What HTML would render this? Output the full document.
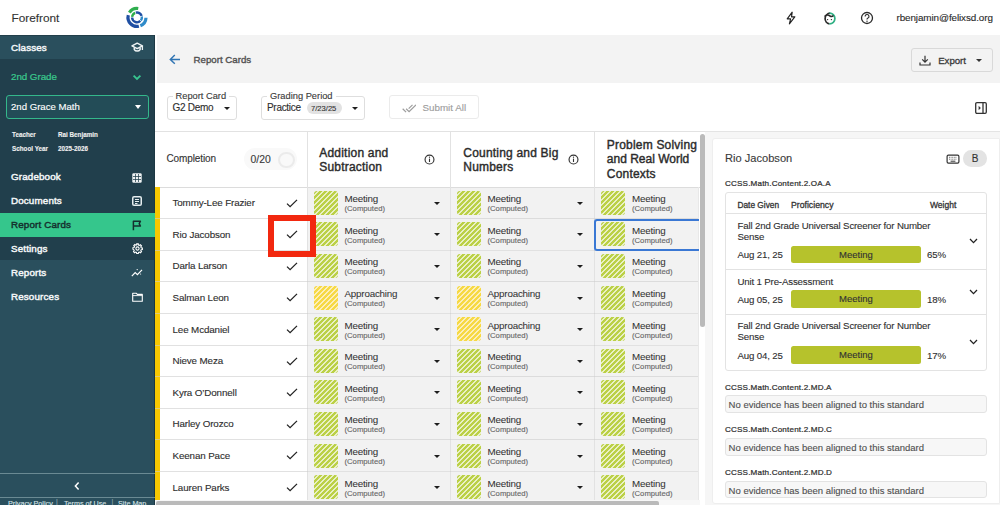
<!DOCTYPE html>
<html><head><meta charset="utf-8"><style>
*{box-sizing:border-box;margin:0;padding:0}
html,body{width:1000px;height:505px;overflow:hidden;background:#fff;font-family:"Liberation Sans",sans-serif;color:#333;-webkit-text-stroke-width:0.12px}
body{position:relative}
.a{position:absolute;white-space:nowrap}
.b{position:absolute}
.nav{position:absolute;left:0;width:155px;height:24px}
.nv{position:absolute;left:11px;color:#f4f7f8;font-size:9.8px;letter-spacing:0.15px;line-height:1;-webkit-text-stroke:0.45px currentColor;white-space:nowrap}
.sw{position:absolute;width:24px;height:24px;border-radius:3px;
 background:repeating-linear-gradient(135deg,#bbd046 0px,#bbd046 2.3px,#e9f0c4 2.3px,#e9f0c4 3.6px)}
.sw.y{background:repeating-linear-gradient(135deg,#f6d944 0px,#f6d944 2.3px,#fcefbb 2.3px,#fcefbb 3.6px)}
.mt{position:absolute;font-size:9.8px;letter-spacing:-0.2px;color:#333;-webkit-text-stroke:0.05px #333;white-space:nowrap}
.cp{position:absolute;font-size:7.7px;color:#666;white-space:nowrap}
.car{position:absolute;width:0;height:0;border-left:3.2px solid transparent;border-right:3.2px solid transparent;border-top:3.6px solid #1e1e1e}
.hd{position:absolute;font-size:12px;letter-spacing:0.2px;line-height:1;-webkit-text-stroke:0.4px #2b2b2b;color:#2b2b2b;white-space:nowrap}
.nm{position:absolute;font-size:9.8px;letter-spacing:-0.12px;color:#2e2e2e;-webkit-text-stroke:0.12px #2e2e2e;white-space:nowrap}
.hl{position:absolute;height:1px;background:#e2e2e2}
.vl{position:absolute;width:1px;background:#e2e2e2}
.lbl{position:absolute;left:725px;font-size:8.1px;letter-spacing:0.17px;line-height:1;-webkit-text-stroke:0.22px #2e2e2e;color:#2e2e2e;white-space:nowrap}
.noev{position:absolute;left:725px;width:262px;height:17.8px;background:#f7f7f7;border:1px solid #e3e3e3;border-radius:3px}
.noevt{position:absolute;left:728.6px;font-size:9.5px;color:#505050;white-space:nowrap}
.ev{position:absolute;font-size:9.7px;letter-spacing:-0.17px;line-height:1;color:#2e2e2e;-webkit-text-stroke:0.1px #2e2e2e;white-space:nowrap}
.bar{position:absolute;left:790.8px;width:130.3px;height:17.8px;background:#b6c22c;border-radius:2.5px;font-size:9.5px;color:#333;text-align:center;line-height:17.5px}
</style></head><body>
<div class="a" style="left:11.5px;top:10.5px;font-size:11.8px;color:#333">Forefront</div>
<svg class="b" style="left:125px;top:5px" width="25" height="25" viewBox="0 0 25 25">
<g fill="none">
<path d="M4.37 7.63 A9 9 0 0 1 13.25 3.49" stroke="#2fae4e" stroke-width="3.2"/>
<path d="M13.87 21.20 A9 9 0 0 1 3.31 10.07" stroke="#1f4fa3" stroke-width="3.2"/>
<path d="M20.99 12.71 A9 9 0 0 1 15.37 20.74" stroke="#2f8bc9" stroke-width="3.2"/>
<path d="M7.12 11.97 A4.9 4.9 0 0 1 10.16 7.86" stroke="#2fae4e" stroke-width="2.4"/>
<path d="M10.81 7.65 A4.9 4.9 0 0 1 16.66 10.89" stroke="#1f4fa3" stroke-width="2.4"/>
<path d="M16.83 11.55 A4.9 4.9 0 0 1 15.86 15.42" stroke="#2f8bc9" stroke-width="2.4"/>
<path d="M15.40 15.92 A4.9 4.9 0 0 1 7.10 12.57" stroke="#1f4fa3" stroke-width="2.4"/>
</g></svg>
<svg class="b" style="left:785px;top:11px" width="12" height="14" viewBox="0 0 12 14">
<path d="M7.2 1.2 L2.2 7.8 H5.6 L4.4 12.8 L9.8 5.8 H6.5 Z" fill="none" stroke="#222" stroke-width="1.15" stroke-linejoin="round"/></svg>
<svg class="b" style="left:822px;top:10.5px" width="15" height="15" viewBox="0 0 15 15">
<path d="M8.2 2.2 A5.4 5.4 0 0 0 7.5 12.9" fill="none" stroke="#2b2b2b" stroke-width="1.7"/>
<path d="M7.5 2.1 A5.4 5.4 0 0 1 7.5 12.9" fill="none" stroke="#2fb083" stroke-width="1.7"/>
<path d="M2.6 5.6 C4.2 3.6 6.4 3.8 8 5 C9.2 5.8 10.6 5.4 11.4 4.4" fill="none" stroke="#2b2b2b" stroke-width="1.6"/>
<circle cx="5.6" cy="8.6" r="0.7" fill="#2b2b2b"/><circle cx="9.4" cy="8.6" r="0.7" fill="#2b2b2b"/>
</svg>
<svg class="b" style="left:860px;top:10.5px" width="14" height="14" viewBox="0 0 14 14">
<circle cx="7" cy="7" r="5.5" fill="none" stroke="#2b2b2b" stroke-width="1.3"/>
<path d="M5.1 5.5 A1.95 1.95 0 1 1 7.6 7.3 C7.1 7.6 7 7.9 7 8.6" fill="none" stroke="#2b2b2b" stroke-width="1.15"/>
<circle cx="7" cy="10.2" r="0.7" fill="#2b2b2b"/></svg>
<div class="a" style="left:896.5px;top:12px;font-size:9.9px;letter-spacing:-0.1px;color:#2a2a2a">rbenjamin@felixsd.org</div>
<div class="b" style="left:0;top:35px;width:155px;height:470px;background:#2a4f5d"></div>
<div class="b" style="left:0;top:59px;width:155px;height:201px;background:#213f4c"></div>
<div class="b" style="left:0;top:35px;width:155px;height:1px;background:#223f4b"></div>
<div class="b" style="left:153.8px;top:35px;width:1.2px;height:470px;background:#1b3743"></div>
<div class="nv" style="top:43.2px">Classes</div>
<svg class="b" style="left:131px;top:42px" width="13" height="11" viewBox="0 0 13 11">
<path d="M6.2 1.2 L11.4 3.9 L6.2 6.6 L1.0 3.9 Z" fill="none" stroke="#eef3f4" stroke-width="1.5" stroke-linejoin="round"/>
<path d="M3.3 5.6 V7.6 C4.6 9.6 7.8 9.6 9.1 7.6 V5.6" fill="none" stroke="#eef3f4" stroke-width="1.5"/>
<path d="M11.4 4 V8" stroke="#eef3f4" stroke-width="1.3"/></svg>
<div class="a" style="left:11px;top:70.5px;font-size:9.8px;letter-spacing:-0.05px;-webkit-text-stroke:0.2px #3bcb8e;color:#3bcb8e">2nd Grade</div>
<svg class="b" style="left:132px;top:73.5px" width="10" height="7" viewBox="0 0 10 7">
<path d="M1.6 1.6 L5 5 L8.4 1.6" fill="none" stroke="#38c690" stroke-width="1.8"/></svg>
<div class="b" style="left:5.5px;top:95px;width:143.5px;height:24px;border:1.3px solid #34b88b;border-radius:3px;background:#234c57"></div>
<div class="a" style="left:11px;top:100.5px;font-size:9.6px;color:#fff">2nd Grace Math</div>
<div class="car" style="left:135px;top:105px;border-top-color:#fff;border-left-width:3.5px;border-right-width:3.5px;border-top-width:4px"></div>
<div class="a" style="left:12px;top:130.5px;font-size:6.3px;color:#f0f0f0;font-weight:bold">Teacher</div>
<div class="a" style="left:58px;top:130.5px;font-size:6.3px;color:#f0f0f0;font-weight:bold">Rai Benjamin</div>
<div class="a" style="left:12px;top:145px;font-size:6.3px;color:#f0f0f0;font-weight:bold">School Year</div>
<div class="a" style="left:58px;top:145px;font-size:6.3px;color:#f0f0f0;font-weight:bold">2025-2026</div>
<div class="nv" style="top:172px">Gradebook</div>
<div class="nv" style="top:196px">Documents</div>
<div class="b" style="left:0;top:213px;width:155px;height:24px;background:#35c68c"></div>
<div class="nv" style="top:220px;color:#15302f">Report Cards</div>
<div class="nv" style="top:243.8px">Settings</div>
<div class="nv" style="top:267.8px">Reports</div>
<div class="nv" style="top:291.8px">Resources</div>
<svg class="b" style="left:132px;top:172.5px" width="10" height="10" viewBox="0 0 10 10">
<rect x="0.3" y="0.3" width="9.4" height="9.4" rx="1.2" fill="#eef2f3"/>
<path d="M3.5 1V9M6.5 1V9M1 3.5H9M1 6.5H9" stroke="#213f4c" stroke-width="0.75"/></svg>
<svg class="b" style="left:132px;top:196px" width="10" height="10" viewBox="0 0 10 10">
<rect x="0.75" y="0.75" width="8.5" height="8.5" rx="1.3" fill="none" stroke="#e6edef" stroke-width="1.5"/>
<path d="M3 3.5H7M3 5.5H7M3 7.5H5.5" stroke="#e6edef" stroke-width="1"/></svg>
<svg class="b" style="left:132px;top:220px" width="10" height="11" viewBox="0 0 10 11">
<path d="M1.4 10.2 V1.2 H8.4 L7.2 3.6 L8.4 6 H1.4" fill="none" stroke="#15302f" stroke-width="1.5" stroke-linejoin="round"/></svg>
<svg class="b" style="left:131.5px;top:243px" width="11" height="11" viewBox="0 0 24 24">
<path fill="none" stroke="#fff" stroke-width="2.4" d="M12 8.5a3.5 3.5 0 1 0 0 7a3.5 3.5 0 1 0 0-7zM10.3 2h3.4l.5 2.6 1.9.8 2.2-1.5 2.4 2.4-1.5 2.2.8 1.9 2.6.5v3.4l-2.6.5-.8 1.9 1.5 2.2-2.4 2.4-2.2-1.5-1.9.8-.5 2.6h-3.4l-.5-2.6-1.9-.8-2.2 1.5-2.4-2.4 1.5-2.2-.8-1.9L2 13.7v-3.4l2.6-.5.8-1.9-1.5-2.2 2.4-2.4 2.2 1.5 1.9-.8z"/></svg>
<svg class="b" style="left:131px;top:268px" width="12" height="9" viewBox="0 0 12 9">
<path d="M0.8 8.2 L4.2 4.6 L6.4 6.6 L11 1.8" fill="none" stroke="#fff" stroke-width="1.2"/>
<circle cx="6.2" cy="1.6" r="0.7" fill="#fff"/><circle cx="9.6" cy="6" r="0.6" fill="#fff"/></svg>
<svg class="b" style="left:131.5px;top:291.5px" width="11" height="10" viewBox="0 0 11 10">
<path d="M0.7 1.2 H4.2 L5.3 2.4 H10.3 V9.3 H0.7 Z" fill="none" stroke="#fff" stroke-width="1.1" stroke-linejoin="round"/>
<path d="M0.7 3.6 H10.3" stroke="#fff" stroke-width="0.9"/></svg>
<div class="b" style="left:0;top:473px;width:155px;height:1px;background:#6a8a93"></div>
<svg class="b" style="left:73px;top:481px" width="8" height="10" viewBox="0 0 8 10">
<path d="M5.6 1.6 L2.4 5 L5.6 8.4" fill="none" stroke="#fff" stroke-width="1.5"/></svg>
<div class="b" style="left:0;top:496.5px;width:155px;height:1px;background:#6a8a93"></div>
<div class="a" style="left:8px;top:498.5px;font-size:7.2px;color:#d6e2e5">Privacy Policy</div>
<div class="a" style="left:56px;top:498px;font-size:7px;color:#8fa8ae">|</div>
<div class="a" style="left:64px;top:498.5px;font-size:7.2px;color:#d6e2e5">Terms of Use</div>
<div class="a" style="left:111.5px;top:498px;font-size:7px;color:#8fa8ae">|</div>
<div class="a" style="left:118px;top:498.5px;font-size:7.2px;color:#d6e2e5">Site Map</div>
<div class="b" style="left:157px;top:35px;width:843px;height:48.3px;background:#f3f3f3"></div>
<svg class="b" style="left:168.5px;top:54.3px" width="12" height="11" viewBox="0 0 12 11">
<path d="M11 5.4 H1.8 M5.8 1.1 L1.3 5.4 L5.8 9.7" fill="none" stroke="#2f74b3" stroke-width="1.45"/></svg>
<div class="a" style="left:193.5px;top:55.3px;font-size:9.7px;line-height:1;-webkit-text-stroke:0.35px #505050;color:#505050">Report Cards</div>
<div class="b" style="left:910.5px;top:48px;width:82px;height:23.6px;border:1px solid #d9d9d9;border-radius:3px;background:#f3f3f3"></div>
<svg class="b" style="left:918.5px;top:54.5px" width="12" height="11" viewBox="0 0 12 11">
<path d="M6 0.8 V7 M3.2 4.4 L6 7.2 L8.8 4.4 M1 7.6 V10 H11 V7.6" fill="none" stroke="#333" stroke-width="1.2"/></svg>
<div class="a" style="left:938.2px;top:55.2px;font-size:9.7px;letter-spacing:-0.05px;-webkit-text-stroke:0.3px #3a3a3a;color:#3a3a3a">Export</div>
<div class="car" style="left:975.5px;top:58.5px;border-top-color:#333"></div>
<div class="b" style="left:166.5px;top:95.5px;width:70.5px;height:24px;border:1px solid #dedede;border-radius:3px"></div>
<div class="b" style="left:172.5px;top:93px;width:56.5px;height:4px;background:#fff"></div>
<div class="a" style="left:175.5px;top:90.7px;font-size:9.3px;color:#3a3a3a">Report Card</div>
<div class="a" style="left:172.5px;top:101.5px;font-size:10px;letter-spacing:-0.3px;color:#2e2e2e">G2 Demo</div>
<div class="car" style="left:223.5px;top:107px"></div>
<div class="b" style="left:261px;top:95.5px;width:103.5px;height:24px;border:1px solid #dedede;border-radius:3px"></div>
<div class="b" style="left:267px;top:93px;width:68.5px;height:4px;background:#fff"></div>
<div class="a" style="left:270px;top:90.7px;font-size:9.3px;color:#3a3a3a">Grading Period</div>
<div class="a" style="left:267px;top:101.5px;font-size:10px;letter-spacing:-0.3px;color:#2e2e2e">Practice</div>
<div class="b" style="left:307px;top:102px;width:34.5px;height:11.5px;border-radius:6px;background:#e2e2e2"></div>
<div class="a" style="left:311px;top:103.8px;font-size:7.6px;color:#333">7/23/25</div>
<div class="car" style="left:351.5px;top:107px"></div>
<div class="b" style="left:389.3px;top:95.3px;width:89.8px;height:24px;border:1px solid #ebebeb;border-radius:3px"></div>
<svg class="b" style="left:401.6px;top:100.8px" width="14.6" height="14.6" viewBox="0 0 24 24">
<path fill="#9e9e9e" d="M18 7l-1.41-1.41-6.34 6.34 1.41 1.41L18 7zm4.24-1.41L11.66 16.17 7.48 12l-1.41 1.41L11.66 19l12-12-1.42-1.41zM.41 13.41L6 19l1.41-1.41L1.83 12 .41 13.41z"/></svg>
<div class="a" style="left:422.5px;top:102px;font-size:9.8px;color:#9c9c9c">Submit All</div>
<svg class="b" style="left:975px;top:102px" width="12" height="12" viewBox="0 0 12 12">
<rect x="0.7" y="0.7" width="10.6" height="10.6" rx="1.2" fill="none" stroke="#333" stroke-width="1.3"/>
<path d="M8 0.7 V11.3" stroke="#333" stroke-width="1.3"/><path d="M3.6 3.8 L5.8 6 L3.6 8.2 Z" fill="#333"/></svg>
<div class="hl" style="left:155px;top:131px;width:845px"></div>
<div class="hl" style="left:155px;top:186.5px;width:545px;background:#dcdcdc"></div>
<div class="a" style="left:166.5px;top:153.1px;font-size:10px;letter-spacing:-0.12px;color:#333">Completion</div>
<div class="b" style="left:244px;top:147.5px;width:53px;height:22px;border-radius:11px;background:#f9f9f9"></div>
<div class="a" style="left:250.5px;top:155px;font-size:10.4px;line-height:1;color:#3a3a3a">0/20</div>
<div class="b" style="left:278px;top:151.5px;width:16.5px;height:16.5px;border-radius:50%;border:2.6px solid #ebebeb"></div>
<div class="hd" style="left:319.3px;top:146.60px">Addition and</div>
<div class="hd" style="left:319.3px;top:160.95px">Subtraction</div>
<div class="hd" style="left:463.3px;top:146.60px">Counting and Big</div>
<div class="hd" style="left:463.3px;top:160.95px">Numbers</div>
<div class="hd" style="left:606.8px;top:139.10px">Problem Solving</div>
<div class="hd" style="left:606.8px;top:153.45px;letter-spacing:0">and Real World</div>
<div class="hd" style="left:606.8px;top:167.80px">Contexts</div>
<svg class="b" style="left:424.2px;top:153.8px" width="11" height="11" viewBox="0 0 11 11">
<circle cx="5.5" cy="5.5" r="4.45" fill="none" stroke="#333" stroke-width="1.15"/>
<path d="M5.5 4.6 V8" stroke="#333" stroke-width="1.1"/><circle cx="5.5" cy="3.2" r="0.65" fill="#333"/></svg>
<svg class="b" style="left:568.2px;top:153.8px" width="11" height="11" viewBox="0 0 11 11">
<circle cx="5.5" cy="5.5" r="4.45" fill="none" stroke="#333" stroke-width="1.15"/>
<path d="M5.5 4.6 V8" stroke="#333" stroke-width="1.1"/><circle cx="5.5" cy="3.2" r="0.65" fill="#333"/></svg>
<div class="b" style="left:154.6px;top:187.00px;width:5.7px;height:31.80px;background:#f8c800"></div>
<div class="nm" style="left:172.5px;top:197.10px">Tommy-Lee Frazier</div>
<svg class="b" style="left:286px;top:198.5px" width="12" height="9" viewBox="0 0 12 9">
<path d="M1 4.6 L4.1 7.6 L11 0.9" fill="none" stroke="#222" stroke-width="1.3"/></svg>
<div class="b" style="left:307.5px;top:187.5px;width:142.5px;height:31.1px;background:#f2f2f2"></div>
<div class="sw" style="left:313.5px;top:190.8px"></div>
<div class="mt" style="left:344.5px;top:193.10px">Meeting</div>
<div class="cp" style="left:344.5px;top:204.2px">(Computed)</div>
<div class="car" style="left:434.00px;top:201.80px"></div>
<div class="b" style="left:450.5px;top:187.5px;width:144px;height:31.1px;background:#f2f2f2"></div>
<div class="sw" style="left:456.5px;top:190.8px"></div>
<div class="mt" style="left:487.5px;top:193.10px">Meeting</div>
<div class="cp" style="left:487.5px;top:204.2px">(Computed)</div>
<div class="car" style="left:577.00px;top:201.80px"></div>
<div class="b" style="left:595px;top:187.5px;width:103px;height:31.1px;background:#f2f2f2"></div>
<div class="sw" style="left:601px;top:190.8px"></div>
<div class="mt" style="left:632px;top:193.10px">Meeting</div>
<div class="cp" style="left:632px;top:204.2px">(Computed)</div>
<div class="b" style="left:154.6px;top:218.60px;width:5.7px;height:31.80px;background:#f8c800"></div>
<div class="nm" style="left:172.5px;top:228.70px">Rio Jacobson</div>
<svg class="b" style="left:286px;top:230.1px" width="12" height="9" viewBox="0 0 12 9">
<path d="M1 4.6 L4.1 7.6 L11 0.9" fill="none" stroke="#222" stroke-width="1.3"/></svg>
<div class="b" style="left:307.5px;top:219.1px;width:142.5px;height:31.1px;background:#f2f2f2"></div>
<div class="sw" style="left:313.5px;top:222.4px"></div>
<div class="mt" style="left:344.5px;top:224.70px">Meeting</div>
<div class="cp" style="left:344.5px;top:235.79999999999998px">(Computed)</div>
<div class="car" style="left:434.00px;top:233.40px"></div>
<div class="b" style="left:450.5px;top:219.1px;width:144px;height:31.1px;background:#f2f2f2"></div>
<div class="sw" style="left:456.5px;top:222.4px"></div>
<div class="mt" style="left:487.5px;top:224.70px">Meeting</div>
<div class="cp" style="left:487.5px;top:235.79999999999998px">(Computed)</div>
<div class="car" style="left:577.00px;top:233.40px"></div>
<div class="b" style="left:595px;top:219.1px;width:103px;height:31.1px;background:#f2f2f2"></div>
<div class="sw" style="left:601px;top:222.4px"></div>
<div class="mt" style="left:632px;top:224.70px">Meeting</div>
<div class="cp" style="left:632px;top:235.79999999999998px">(Computed)</div>
<div class="b" style="left:154.6px;top:250.20px;width:5.7px;height:31.80px;background:#f8c800"></div>
<div class="nm" style="left:172.5px;top:260.30px">Darla Larson</div>
<svg class="b" style="left:286px;top:261.7px" width="12" height="9" viewBox="0 0 12 9">
<path d="M1 4.6 L4.1 7.6 L11 0.9" fill="none" stroke="#222" stroke-width="1.3"/></svg>
<div class="b" style="left:307.5px;top:250.7px;width:142.5px;height:31.1px;background:#f2f2f2"></div>
<div class="sw" style="left:313.5px;top:254.0px"></div>
<div class="mt" style="left:344.5px;top:256.30px">Meeting</div>
<div class="cp" style="left:344.5px;top:267.4px">(Computed)</div>
<div class="car" style="left:434.00px;top:265.00px"></div>
<div class="b" style="left:450.5px;top:250.7px;width:144px;height:31.1px;background:#f2f2f2"></div>
<div class="sw" style="left:456.5px;top:254.0px"></div>
<div class="mt" style="left:487.5px;top:256.30px">Meeting</div>
<div class="cp" style="left:487.5px;top:267.4px">(Computed)</div>
<div class="car" style="left:577.00px;top:265.00px"></div>
<div class="b" style="left:595px;top:250.7px;width:103px;height:31.1px;background:#f2f2f2"></div>
<div class="sw" style="left:601px;top:254.0px"></div>
<div class="mt" style="left:632px;top:256.30px">Meeting</div>
<div class="cp" style="left:632px;top:267.4px">(Computed)</div>
<div class="b" style="left:154.6px;top:281.80px;width:5.7px;height:31.80px;background:#f8c800"></div>
<div class="nm" style="left:172.5px;top:291.90px">Salman Leon</div>
<svg class="b" style="left:286px;top:293.3px" width="12" height="9" viewBox="0 0 12 9">
<path d="M1 4.6 L4.1 7.6 L11 0.9" fill="none" stroke="#222" stroke-width="1.3"/></svg>
<div class="b" style="left:307.5px;top:282.3px;width:142.5px;height:31.1px;background:#f2f2f2"></div>
<div class="sw y" style="left:313.5px;top:285.6px"></div>
<div class="mt" style="left:344.5px;top:287.90px">Approaching</div>
<div class="cp" style="left:344.5px;top:299.0px">(Computed)</div>
<div class="car" style="left:434.00px;top:296.60px"></div>
<div class="b" style="left:450.5px;top:282.3px;width:144px;height:31.1px;background:#f2f2f2"></div>
<div class="sw y" style="left:456.5px;top:285.6px"></div>
<div class="mt" style="left:487.5px;top:287.90px">Approaching</div>
<div class="cp" style="left:487.5px;top:299.0px">(Computed)</div>
<div class="car" style="left:577.00px;top:296.60px"></div>
<div class="b" style="left:595px;top:282.3px;width:103px;height:31.1px;background:#f2f2f2"></div>
<div class="sw" style="left:601px;top:285.6px"></div>
<div class="mt" style="left:632px;top:287.90px">Meeting</div>
<div class="cp" style="left:632px;top:299.0px">(Computed)</div>
<div class="b" style="left:154.6px;top:313.40px;width:5.7px;height:31.80px;background:#f8c800"></div>
<div class="nm" style="left:172.5px;top:323.50px">Lee Mcdaniel</div>
<svg class="b" style="left:286px;top:324.9px" width="12" height="9" viewBox="0 0 12 9">
<path d="M1 4.6 L4.1 7.6 L11 0.9" fill="none" stroke="#222" stroke-width="1.3"/></svg>
<div class="b" style="left:307.5px;top:313.9px;width:142.5px;height:31.1px;background:#f2f2f2"></div>
<div class="sw" style="left:313.5px;top:317.2px"></div>
<div class="mt" style="left:344.5px;top:319.50px">Meeting</div>
<div class="cp" style="left:344.5px;top:330.59999999999997px">(Computed)</div>
<div class="car" style="left:434.00px;top:328.20px"></div>
<div class="b" style="left:450.5px;top:313.9px;width:144px;height:31.1px;background:#f2f2f2"></div>
<div class="sw y" style="left:456.5px;top:317.2px"></div>
<div class="mt" style="left:487.5px;top:319.50px">Approaching</div>
<div class="cp" style="left:487.5px;top:330.59999999999997px">(Computed)</div>
<div class="car" style="left:577.00px;top:328.20px"></div>
<div class="b" style="left:595px;top:313.9px;width:103px;height:31.1px;background:#f2f2f2"></div>
<div class="sw" style="left:601px;top:317.2px"></div>
<div class="mt" style="left:632px;top:319.50px">Meeting</div>
<div class="cp" style="left:632px;top:330.59999999999997px">(Computed)</div>
<div class="b" style="left:154.6px;top:345.00px;width:5.7px;height:31.80px;background:#f8c800"></div>
<div class="nm" style="left:172.5px;top:355.10px">Nieve Meza</div>
<svg class="b" style="left:286px;top:356.5px" width="12" height="9" viewBox="0 0 12 9">
<path d="M1 4.6 L4.1 7.6 L11 0.9" fill="none" stroke="#222" stroke-width="1.3"/></svg>
<div class="b" style="left:307.5px;top:345.5px;width:142.5px;height:31.1px;background:#f2f2f2"></div>
<div class="sw" style="left:313.5px;top:348.8px"></div>
<div class="mt" style="left:344.5px;top:351.10px">Meeting</div>
<div class="cp" style="left:344.5px;top:362.2px">(Computed)</div>
<div class="car" style="left:434.00px;top:359.80px"></div>
<div class="b" style="left:450.5px;top:345.5px;width:144px;height:31.1px;background:#f2f2f2"></div>
<div class="sw" style="left:456.5px;top:348.8px"></div>
<div class="mt" style="left:487.5px;top:351.10px">Meeting</div>
<div class="cp" style="left:487.5px;top:362.2px">(Computed)</div>
<div class="car" style="left:577.00px;top:359.80px"></div>
<div class="b" style="left:595px;top:345.5px;width:103px;height:31.1px;background:#f2f2f2"></div>
<div class="sw" style="left:601px;top:348.8px"></div>
<div class="mt" style="left:632px;top:351.10px">Meeting</div>
<div class="cp" style="left:632px;top:362.2px">(Computed)</div>
<div class="b" style="left:154.6px;top:376.60px;width:5.7px;height:31.80px;background:#f8c800"></div>
<div class="nm" style="left:172.5px;top:386.70px">Kyra O’Donnell</div>
<svg class="b" style="left:286px;top:388.1px" width="12" height="9" viewBox="0 0 12 9">
<path d="M1 4.6 L4.1 7.6 L11 0.9" fill="none" stroke="#222" stroke-width="1.3"/></svg>
<div class="b" style="left:307.5px;top:377.1px;width:142.5px;height:31.1px;background:#f2f2f2"></div>
<div class="sw" style="left:313.5px;top:380.40000000000003px"></div>
<div class="mt" style="left:344.5px;top:382.70px">Meeting</div>
<div class="cp" style="left:344.5px;top:393.8px">(Computed)</div>
<div class="car" style="left:434.00px;top:391.40px"></div>
<div class="b" style="left:450.5px;top:377.1px;width:144px;height:31.1px;background:#f2f2f2"></div>
<div class="sw" style="left:456.5px;top:380.40000000000003px"></div>
<div class="mt" style="left:487.5px;top:382.70px">Meeting</div>
<div class="cp" style="left:487.5px;top:393.8px">(Computed)</div>
<div class="car" style="left:577.00px;top:391.40px"></div>
<div class="b" style="left:595px;top:377.1px;width:103px;height:31.1px;background:#f2f2f2"></div>
<div class="sw" style="left:601px;top:380.40000000000003px"></div>
<div class="mt" style="left:632px;top:382.70px">Meeting</div>
<div class="cp" style="left:632px;top:393.8px">(Computed)</div>
<div class="b" style="left:154.6px;top:408.20px;width:5.7px;height:31.80px;background:#f8c800"></div>
<div class="nm" style="left:172.5px;top:418.30px">Harley Orozco</div>
<svg class="b" style="left:286px;top:419.70000000000005px" width="12" height="9" viewBox="0 0 12 9">
<path d="M1 4.6 L4.1 7.6 L11 0.9" fill="none" stroke="#222" stroke-width="1.3"/></svg>
<div class="b" style="left:307.5px;top:408.70000000000005px;width:142.5px;height:31.1px;background:#f2f2f2"></div>
<div class="sw" style="left:313.5px;top:412.00000000000006px"></div>
<div class="mt" style="left:344.5px;top:414.30px">Meeting</div>
<div class="cp" style="left:344.5px;top:425.40000000000003px">(Computed)</div>
<div class="car" style="left:434.00px;top:423.00px"></div>
<div class="b" style="left:450.5px;top:408.70000000000005px;width:144px;height:31.1px;background:#f2f2f2"></div>
<div class="sw" style="left:456.5px;top:412.00000000000006px"></div>
<div class="mt" style="left:487.5px;top:414.30px">Meeting</div>
<div class="cp" style="left:487.5px;top:425.40000000000003px">(Computed)</div>
<div class="car" style="left:577.00px;top:423.00px"></div>
<div class="b" style="left:595px;top:408.70000000000005px;width:103px;height:31.1px;background:#f2f2f2"></div>
<div class="sw" style="left:601px;top:412.00000000000006px"></div>
<div class="mt" style="left:632px;top:414.30px">Meeting</div>
<div class="cp" style="left:632px;top:425.40000000000003px">(Computed)</div>
<div class="b" style="left:154.6px;top:439.80px;width:5.7px;height:31.80px;background:#f8c800"></div>
<div class="nm" style="left:172.5px;top:449.90px">Keenan Pace</div>
<svg class="b" style="left:286px;top:451.3px" width="12" height="9" viewBox="0 0 12 9">
<path d="M1 4.6 L4.1 7.6 L11 0.9" fill="none" stroke="#222" stroke-width="1.3"/></svg>
<div class="b" style="left:307.5px;top:440.3px;width:142.5px;height:31.1px;background:#f2f2f2"></div>
<div class="sw" style="left:313.5px;top:443.6px"></div>
<div class="mt" style="left:344.5px;top:445.90px">Meeting</div>
<div class="cp" style="left:344.5px;top:457.0px">(Computed)</div>
<div class="car" style="left:434.00px;top:454.60px"></div>
<div class="b" style="left:450.5px;top:440.3px;width:144px;height:31.1px;background:#f2f2f2"></div>
<div class="sw" style="left:456.5px;top:443.6px"></div>
<div class="mt" style="left:487.5px;top:445.90px">Meeting</div>
<div class="cp" style="left:487.5px;top:457.0px">(Computed)</div>
<div class="car" style="left:577.00px;top:454.60px"></div>
<div class="b" style="left:595px;top:440.3px;width:103px;height:31.1px;background:#f2f2f2"></div>
<div class="sw" style="left:601px;top:443.6px"></div>
<div class="mt" style="left:632px;top:445.90px">Meeting</div>
<div class="cp" style="left:632px;top:457.0px">(Computed)</div>
<div class="b" style="left:154.6px;top:471.40px;width:5.7px;height:31.80px;background:#f8c800"></div>
<div class="nm" style="left:172.5px;top:481.50px">Lauren Parks</div>
<svg class="b" style="left:286px;top:482.90000000000003px" width="12" height="9" viewBox="0 0 12 9">
<path d="M1 4.6 L4.1 7.6 L11 0.9" fill="none" stroke="#222" stroke-width="1.3"/></svg>
<div class="b" style="left:307.5px;top:471.90000000000003px;width:142.5px;height:31.1px;background:#f2f2f2"></div>
<div class="sw" style="left:313.5px;top:475.20000000000005px"></div>
<div class="mt" style="left:344.5px;top:477.50px">Meeting</div>
<div class="cp" style="left:344.5px;top:488.6px">(Computed)</div>
<div class="car" style="left:434.00px;top:486.20px"></div>
<div class="b" style="left:450.5px;top:471.90000000000003px;width:144px;height:31.1px;background:#f2f2f2"></div>
<div class="sw" style="left:456.5px;top:475.20000000000005px"></div>
<div class="mt" style="left:487.5px;top:477.50px">Meeting</div>
<div class="cp" style="left:487.5px;top:488.6px">(Computed)</div>
<div class="car" style="left:577.00px;top:486.20px"></div>
<div class="b" style="left:595px;top:471.90000000000003px;width:103px;height:31.1px;background:#f2f2f2"></div>
<div class="sw" style="left:601px;top:475.20000000000005px"></div>
<div class="mt" style="left:632px;top:477.50px">Meeting</div>
<div class="cp" style="left:632px;top:488.6px">(Computed)</div>
<div class="vl" style="left:307px;top:132px;height:373px"></div>
<div class="vl" style="left:450px;top:132px;height:373px"></div>
<div class="vl" style="left:594px;top:132px;height:373px"></div>
<div class="vl" style="left:698px;top:187px;height:318px;background:#e8e8e8"></div>
<div class="hl" style="left:154.6px;top:218.10px;width:543.4px;background:rgba(205,205,205,0.6)"></div>
<div class="hl" style="left:154.6px;top:249.70px;width:543.4px;background:rgba(205,205,205,0.6)"></div>
<div class="hl" style="left:154.6px;top:281.30px;width:543.4px;background:rgba(205,205,205,0.6)"></div>
<div class="hl" style="left:154.6px;top:312.90px;width:543.4px;background:rgba(205,205,205,0.6)"></div>
<div class="hl" style="left:154.6px;top:344.50px;width:543.4px;background:rgba(205,205,205,0.6)"></div>
<div class="hl" style="left:154.6px;top:376.10px;width:543.4px;background:rgba(205,205,205,0.6)"></div>
<div class="hl" style="left:154.6px;top:407.70px;width:543.4px;background:rgba(205,205,205,0.6)"></div>
<div class="hl" style="left:154.6px;top:439.30px;width:543.4px;background:rgba(205,205,205,0.6)"></div>
<div class="hl" style="left:154.6px;top:470.90px;width:543.4px;background:rgba(205,205,205,0.6)"></div>
<div class="hl" style="left:154.6px;top:502.50px;width:543.4px;background:rgba(205,205,205,0.6)"></div>
<div class="b" style="left:594px;top:218.6px;width:104.5px;height:32.1px;border:2px solid #3a78d4;border-right:none;border-radius:3px 0 0 3px"></div>
<div class="b" style="left:267.5px;top:214.5px;width:48.5px;height:42.5px;border:6px solid #f2280f"></div>
<div class="b" style="left:700px;top:134px;width:4.8px;height:193px;border-radius:3px;background:#bababa"></div>
<div class="b" style="left:705px;top:132px;width:7px;height:373px;background:#f3f3f3"></div>
<div class="b" style="left:155px;top:500px;width:545px;height:5px;background:#f7f7f7"></div>
<div class="b" style="left:155.5px;top:501px;width:503.5px;height:6px;border-radius:2px;background:#bababa"></div>
<div class="b" style="left:705px;top:132px;width:295px;height:373px;background:#f6f6f6"></div>
<div class="b" style="left:712px;top:137.5px;width:288px;height:366px;background:#fff;border:1px solid #eeeeee;border-radius:3px 0 0 3px"></div>
<div class="hl" style="left:705px;top:131.2px;width:295px;height:1.3px;background:#e4e4e4"></div>
<div class="a" style="left:725px;top:152.4px;font-size:11.1px;color:#3a3a3a">Rio Jacobson</div>
<svg class="b" style="left:946px;top:153.5px" width="14" height="10" viewBox="0 0 14 10">
<rect x="1.1" y="1.1" width="11.8" height="8" rx="1.3" fill="none" stroke="#333" stroke-width="1.2"/>
<path d="M3 3.3H11M3 5.2H11" stroke="#777" stroke-width="1" stroke-dasharray="1 0.6"/><path d="M4.6 7.2H9.4" stroke="#333" stroke-width="1"/></svg>
<div class="b" style="left:963.3px;top:150.2px;width:23.6px;height:16.4px;border-radius:8.2px;background:#e3e3e3"></div>
<div class="a" style="left:971.8px;top:153.6px;font-size:10px;line-height:1;color:#333">B</div>
<div class="lbl" style="top:180.2px">CCSS.Math.Content.2.OA.A</div>
<div class="b" style="left:725px;top:191.5px;width:262px;height:179px;border:1px solid #e3e3e3;border-radius:3px"></div>
<div class="a" style="left:737.5px;top:201.3px;font-size:8.3px;line-height:1;-webkit-text-stroke:0.3px #333;color:#333">Date Given</div>
<div class="a" style="left:791px;top:201.3px;font-size:8.7px;line-height:1;-webkit-text-stroke:0.3px #333;color:#333">Proficiency</div>
<div class="a" style="left:930px;top:201.3px;font-size:8.5px;line-height:1;-webkit-text-stroke:0.3px #333;color:#333">Weight</div>
<div class="hl" style="left:726px;top:213px;width:260px"></div>
<div class="hl" style="left:726px;top:269px;width:260px"></div>
<div class="hl" style="left:726px;top:314px;width:260px"></div>
<div class="ev" style="left:737.5px;top:221.20px">Fall 2nd Grade Universal Screener for Number</div>
<div class="ev" style="left:737.5px;top:232.20px">Sense</div>
<div class="bar" style="top:245.6px">Meeting</div>
<div class="ev" style="left:737.5px;top:250.40px">Aug 21, 25</div>
<div class="ev" style="left:927px;top:250.40px">65%</div>
<div class="ev" style="left:737.5px;top:277.20px">Unit 1 Pre-Assessment</div>
<div class="bar" style="top:290.4px">Meeting</div>
<div class="ev" style="left:737.5px;top:295.20px">Aug 05, 25</div>
<div class="ev" style="left:927px;top:295.20px">18%</div>
<div class="ev" style="left:737.5px;top:321.00px">Fall 2nd Grade Universal Screener for Number</div>
<div class="ev" style="left:737.5px;top:332.00px">Sense</div>
<div class="bar" style="top:346.0px">Meeting</div>
<div class="ev" style="left:737.5px;top:350.80px">Aug 04, 25</div>
<div class="ev" style="left:927px;top:350.80px">17%</div>
<svg class="b" style="left:968.5px;top:237.8px" width="9" height="6" viewBox="0 0 9 6">
<path d="M1 1 L4.5 4.6 L8 1" fill="none" stroke="#222" stroke-width="1.3"/></svg>
<svg class="b" style="left:968.5px;top:288.5px" width="9" height="6" viewBox="0 0 9 6">
<path d="M1 1 L4.5 4.6 L8 1" fill="none" stroke="#222" stroke-width="1.3"/></svg>
<svg class="b" style="left:968.5px;top:339px" width="9" height="6" viewBox="0 0 9 6">
<path d="M1 1 L4.5 4.6 L8 1" fill="none" stroke="#222" stroke-width="1.3"/></svg>
<div class="lbl" style="top:383.8px">CCSS.Math.Content.2.MD.A</div>
<div class="noev" style="top:395.2px"></div>
<div class="noevt" style="top:399.00px">No evidence has been aligned to this standard</div>
<div class="lbl" style="top:426.3px">CCSS.Math.Content.2.MD.C</div>
<div class="noev" style="top:438.0px"></div>
<div class="noevt" style="top:441.80px">No evidence has been aligned to this standard</div>
<div class="lbl" style="top:468.7px">CCSS.Math.Content.2.MD.D</div>
<div class="noev" style="top:480.7px"></div>
<div class="noevt" style="top:484.50px">No evidence has been aligned to this standard</div>
</body></html>
